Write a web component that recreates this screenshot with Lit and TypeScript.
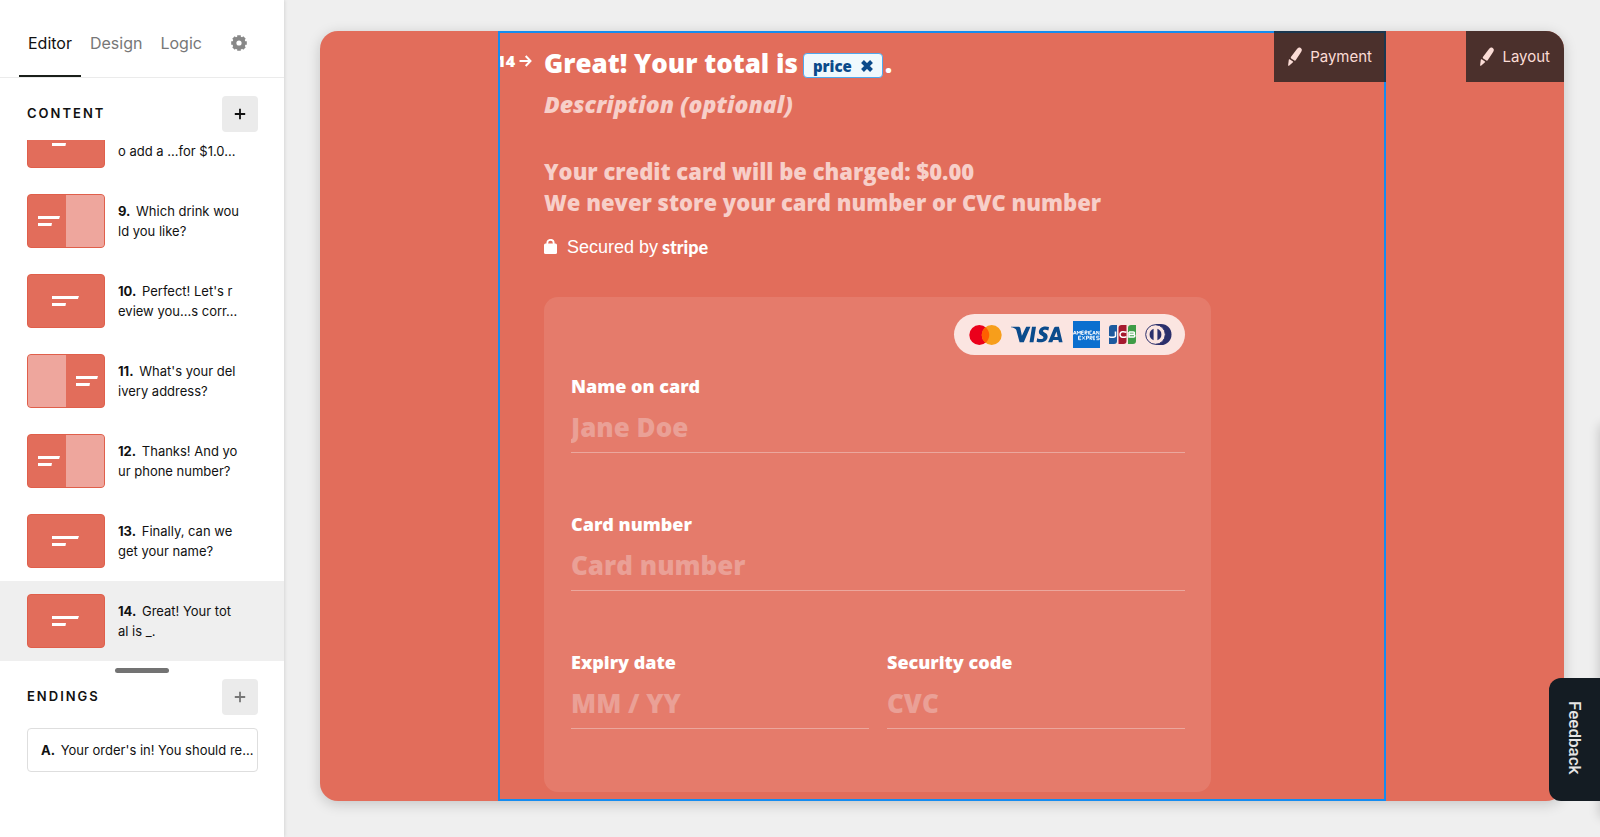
import { LitElement, html, css, svg } from "lit";
import { customElement, property } from "lit/decorators.js";
import { classMap } from "lit/directives/class-map.js";

type Layout = "center" | "left" | "right";

interface Question {
  num: string;
  lines: string[];
  layout: Layout;
  active?: boolean;
}

const QUESTIONS: Question[] = [
  { num: "", lines: ["", "o add a ...for $1.0..."], layout: "center" },
  { num: "9.", lines: ["Which drink wou", "ld you like?"], layout: "left" },
  { num: "10.", lines: ["Perfect! Let's r", "eview you...s corr..."], layout: "center" },
  { num: "11.", lines: ["What's your del", "ivery address?"], layout: "right" },
  { num: "12.", lines: ["Thanks! And yo", "ur phone number?"], layout: "left" },
  { num: "13.", lines: ["Finally, can we", "get your name?"], layout: "center" },
  { num: "14.", lines: ["Great! Your tot", "al is _."], layout: "center", active: true },
];

const plusIcon = html`<svg width="12" height="12" viewBox="0 0 12 12" aria-hidden="true">
  <path d="M6 .8v10.4M.8 6h10.4" stroke="currentColor" stroke-width="1.8" />
</svg>`;

const pencilIcon = html`<svg width="16" height="20" viewBox="0 0 16 20" aria-hidden="true">
  <path
    fill="currentColor"
    d="M9 3.200 10.400 1.500C11.400.4 12.500.2 13.700 1c1.200.8 1.500 1.900.8 3.200l-1.200 2.100-4.600 6.900c-.3.500-.8.600-1.300.3L4.200 11.400c-.5-.3-.6-.8-.3-1.300zM2.700 12.300l3.300 2.200c.3.200.3.600 0 .8L2 18.700c-.5.300-1 0-.9-.5l.7-5.500c.1-.5.500-.7.9-.4z"
  />
</svg>`;

@customElement("question-thumb")
class QuestionThumb extends LitElement {
  @property() layout: Layout = "center";

  static styles = css`
    :host {
      display: block;
    }
    .thumb {
      display: flex;
      box-sizing: border-box;
      width: 78px;
      height: 54px;
      border: 1px solid #e05f4b;
      border-radius: 4px;
      background: #e26d5b;
      overflow: hidden;
    }
    .right {
      flex-direction: row-reverse;
    }
    .text,
    .picture {
      box-sizing: border-box;
      width: 38px;
    }
    .text {
      display: flex;
      flex: 1;
      flex-direction: column;
      justify-content: center;
      gap: 4px;
      padding-left: 10px;
    }
    .center .text {
      padding-left: 24px;
    }
    .picture {
      background: #eea69d;
    }
    .long,
    .short {
      width: 22px;
      height: 3px;
      background: #fff;
      clip-path: polygon(0 0, 100% 0, 96% 100%, 0 100%);
    }
    .center .long {
      width: 27px;
    }
    .short,
    .center .short {
      width: 14px;
    }
  `;

  render() {
    return html`<div class=${classMap({ thumb: true, [this.layout]: true })}>
      <div class="text"><div class="long"></div><div class="short"></div></div>
      ${this.layout === "center" ? null : html`<div class="picture"></div>`}
    </div>`;
  }
}

@customElement("editor-sidebar")
class EditorSidebar extends LitElement {
  static styles = css`
    :host {
      display: flex;
      flex-direction: column;
      width: 284px;
      flex: none;
      min-height: 0;
      background: #fff;
      box-shadow: 0 0 4px rgba(0, 0, 0, 0.16);
      font-family: Inter, sans-serif;
      color: #111;
    }
    button {
      font: inherit;
      color: inherit;
      border: 0;
      padding: 0;
      margin: 0;
      background: none;
      cursor: pointer;
    }
    .tabs {
      display: flex;
      height: 77px;
      padding-left: 19px;
      border-bottom: 1px solid #ebebeb;
      font-size: 16px;
    }
    .tab {
      display: flex;
      align-items: center;
      padding: 9px 9px 0;
      height: 77px;
      color: #777;
    }
    .tab.on {
      color: #111;
      box-shadow: inset 0 -2px #1a1f1a;
    }
    .gear {
      margin-left: 11px;
      color: #888;
    }
    .head {
      display: flex;
      justify-content: space-between;
      align-items: center;
      padding: 0 26px 0 27px;
    }
    .content-head {
      padding-top: 18px;
      padding-bottom: 8px;
    }
    h2 {
      margin: 0;
      padding-bottom: 2px;
      font-size: 13px;
      font-weight: 600;
      letter-spacing: 2px;
    }
    .add {
      display: grid;
      place-items: center;
      width: 36px;
      height: 36px;
      border-radius: 4px;
      background: #ebebeb;
    }
    .muted {
      color: #777;
    }
    .list {
      flex: 1;
      min-height: 0;
      display: flex;
      flex-direction: column;
      justify-content: flex-end;
      overflow: hidden;
    }
    .row {
      display: flex;
      flex: none;
      align-items: center;
      gap: 13px;
      height: 80px;
      padding-left: 27px;
      text-align: left;
      font-size: 13px;
      line-height: 20px;
    }
    .row.active {
      background: #efefef;
    }
    .line {
      display: block;
      min-height: 20px;
      white-space: nowrap;
    }
    b {
      font-weight: 700;
      margin-right: 2px;
    }
    .handle {
      width: 54px;
      height: 5px;
      margin: 7px auto 6px;
      border-radius: 3px;
      background: #737373;
    }
    .ending {
      box-sizing: border-box;
      display: block;
      height: 44px;
      margin: 13px 26px 65px 27px;
      padding: 0 0 0 13px;
      border: 1px solid #dedede;
      border-radius: 4px;
      text-align: left;
      white-space: nowrap;
      font-size: 13px;
    }
  `;

  render() {
    return html`
      <nav class="tabs">
        <button class="tab on">Editor</button>
        <button class="tab">Design</button>
        <button class="tab">Logic</button>
        <button class="tab gear" aria-label="Settings">
          <svg width="16" height="16" viewBox="0 0 16 16">
            <circle cx="8" cy="8" r="4.600" fill="none" stroke="currentColor" stroke-width="4" />
            ${[0, 45, 90, 135].map(
              (a) => svg`<path d="M8 0.200v3M8 12.800v3" stroke="currentColor" stroke-width="3.600" transform="rotate(${a} 8 8)" />`
            )}
          </svg>
        </button>
      </nav>
      <div class="head content-head">
        <h2>CONTENT</h2>
        <button class="add" aria-label="Add content">${plusIcon}</button>
      </div>
      <div class="list">
        ${QUESTIONS.map(
          (q) => html`<button class=${classMap({ row: true, active: !!q.active })}>
            <question-thumb .layout=${q.layout}></question-thumb>
            <span>
              <span class="line"><b>${q.num}</b> ${q.lines[0]}</span>
              <span class="line">${q.lines[1]}</span>
            </span>
          </button>`
        )}
      </div>
      <div class="handle"></div>
      <div class="head">
        <h2>ENDINGS</h2>
        <button class="add muted" aria-label="Add ending">${plusIcon}</button>
      </div>
      <button class="ending"><b>A.</b> Your order's in! You should re...</button>
    `;
  }
}

@customElement("card-brands")
class CardBrands extends LitElement {
  static styles = css`
    :host {
      display: flex;
      align-items: center;
      justify-content: space-between;
      box-sizing: border-box;
      width: 231px;
      height: 41px;
      padding: 0 13px 0 15px;
      border-radius: 21px;
      background: #fbe5e1;
    }
    svg {
      display: block;
    }
  `;

  render() {
    return html`
      <svg width="33" height="20" viewBox="0 0 33 20" role="img" aria-label="Mastercard">
        <circle cx="10.300" cy="10" r="10" fill="#eb001b" />
        <circle cx="22.700" cy="10" r="10" fill="#f79e1b" />
        <path d="M16.500 2.200a10 10 0 0 1 0 15.600 10 10 0 0 1 0-15.600z" fill="#ff5f00" />
      </svg>
      <svg width="52" height="17" viewBox="0 0 52 17" role="img" aria-label="Visa">
        <path
          fill="#0b4b8c"
          d="M0 .7h7.200c1 0 1.800.3 2.100 1.400L10.900 9.800 15.200.7h4.200L12.800 16.300H8.600L5.300 4C4.800 2.400 2.300 1.500 0 1.200zM21 .7h4l-2.500 15.600h-4zM38 1.100l-.6 3.300c-2.600-1.200-5.400-.8-5.400.6 0 1.600 5 1.900 4.600 5.900-.4 4.500-5.600 6.300-11 4.800l.6-3.500c3 1.400 6.200 1 6.200-.8 0-1.800-5-2-4.500-5.900C28.400 1.200 33.500-.6 38 1.100zM44.700.7h3.200L51.600 16.300h-3.700l-.5-2.200h-5.200l-.9 2.200h-4.200L43 1.900c.3-.8.9-1.200 1.700-1.200zm.8 4.700-2.200 5.700h3.400z"
        />
      </svg>
      <svg width="27" height="27" viewBox="0 0 27 27" role="img" aria-label="American Express">
        <rect width="27" height="27" fill="#0b6fcf" />
        <g fill="none" stroke="#fff" stroke-width=".9">
          <path d="M.3 13.500 1.800 10l1.500 3.500M.9 12.600h1.800M4.300 13.500V10l1.500 2.200L7.300 10v3.500M10.700 10H8.600v3.500h2.100M8.600 11.700h1.900M12 13.500V10h2v1.700h-2l2 1.800M15.400 10v3.500M18.800 10h-2v3.500h2M19.600 13.500 21 10l1.500 3.500M20.200 12.600h1.800M23.700 13.500V10l2.300 3.500V10" />
          <path d="M8 15.200H5.500v3.500H8M5.500 17h2M9 15.200l3 3.500M12 15.200l-3 3.500M13.500 18.700v-3.500h2V17h-2M17 18.700v-3.500h2V17h-2l2 1.700M22 15.200h-1.800v3.500H22M20.200 17H22M26.500 15.200h-2.800V17h2.500v1.700h-2.800" />
        </g>
      </svg>
      <svg width="27" height="19" viewBox="0 0 27 19" role="img" aria-label="JCB">
        <path d="M3 0H8v16a3 3 0 0 1-3 3H0V3A3 3 0 0 1 3 0z" fill="#1d5a9e" />
        <path d="M12.500 0H17.500v16a3 3 0 0 1-3 3H9.500V3A3 3 0 0 1 12.500 0z" fill="#a6192e" />
        <path d="M22 0H27v16a3 3 0 0 1-3 3H19V3A3 3 0 0 1 22 0z" fill="#3f9c46" />
        <g fill="none" stroke="#fff" stroke-width="1.500">
          <path d="M6.500 6.500v4.300c0 1.800-4.200 2-6.500.8M17.500 7.300c-3-1-6.500-1-6.500 2.200s3.500 3.200 6.500 2.200M20 6.900h4.300c1.600 0 1.600 2.400 0 2.400H20M20 9.500h4.600c1.700 0 1.700 2.500 0 2.500H20zM20 6.900V12" />
        </g>
      </svg>
      <svg width="27" height="21" viewBox="0 0 27 21" role="img" aria-label="Diners Club">
        <path d="M10.500 0H16c6 0 10.500 4.600 10.500 10.400C26.500 16.500 22 21 16 21h-5.500z" fill="#2b2f6b" />
        <circle cx="10.500" cy="10.500" r="9.800" fill="#fbe5e1" stroke="#2b2f6b" stroke-width="1" />
        <path d="M8.600 4.700a6.200 6.200 0 0 0 0 11.600zM12.400 4.700a6.200 6.200 0 0 1 0 11.600z" fill="#2b2f6b" />
      </svg>
    `;
  }
}

@customElement("payment-block")
class PaymentBlock extends LitElement {
  static styles = css`
    :host {
      display: block;
      box-sizing: border-box;
      width: 100%;
      border: 2px solid #148cf0;
      padding: 14px 173px 0 0;
      font-family: "Open Sans", sans-serif;
      font-weight: 800;
      color: #fff;
    }
    .question {
      display: grid;
      grid-template-columns: 44px minmax(0, 1fr);
    }
    .index {
      display: flex;
      justify-content: flex-end;
      align-items: center;
      gap: 4px;
      height: 28px;
      padding-right: 12px;
      overflow: hidden;
      font-size: 16px;
    }
    .index svg {
      flex: none;
    }
    h1 {
      display: flex;
      align-items: center;
      margin: 0;
      font-size: 26px;
      line-height: 32px;
      font-weight: 800;
      white-space: nowrap;
    }
    .chip {
      display: flex;
      align-items: center;
      gap: 9px;
      box-sizing: border-box;
      height: 25px;
      margin: 5px 2px 0 5px;
      padding: 0 9px;
      border: 1px solid #4fa9ee;
      border-radius: 4px;
      background: #f0f9fd;
      color: #0b4a8a;
      font: inherit;
      font-size: 15px;
      line-height: 20px;
    }
    .description {
      margin: 10px 0 0;
      font-size: 23px;
      line-height: 31px;
      font-style: italic;
      color: #f7cfc9;
    }
    .note {
      margin: 36px 0 0;
      font-size: 22px;
      line-height: 31px;
      color: #f7cfc9;
      white-space: nowrap;
    }
    .secured {
      display: flex;
      align-items: center;
      margin: 17px 0 0;
      font: 18px/24px "Liberation Sans", sans-serif;
    }
    .secured svg {
      margin-right: 10px;
    }
    .stripe {
      margin-left: 4px;
      font-family: Lato, sans-serif;
      font-weight: 900;
    }
    .card {
      display: flex;
      flex-direction: column;
      margin-top: 38px;
      padding: 17px 26px 63px 27px;
      border-radius: 14px;
      background: rgba(255, 255, 255, 0.1);
    }
    card-brands {
      align-self: flex-end;
      margin-bottom: 19px;
    }
    .fields {
      display: grid;
      grid-template-columns: 1fr 1fr;
      gap: 59px 18px;
    }
    .wide {
      grid-column: span 2;
    }
    label {
      display: block;
      font-size: 18px;
      line-height: 24px;
    }
    input {
      display: block;
      box-sizing: border-box;
      width: 100%;
      height: 45px;
      margin: 10px 0 0;
      padding: 0 0 7px;
      border: 0;
      border-bottom: 1px solid #eba79d;
      border-radius: 0;
      outline: 0;
      background: none;
      color: #fff;
      font: inherit;
      font-size: 26px;
    }
    input::placeholder {
      color: #eaa096;
      opacity: 1;
    }
  `;

  private field(id: string, label: string, placeholder: string, wide: boolean) {
    return html`<div class=${classMap({ wide })}>
      <label for=${id}>${label}</label>
      <input id=${id} placeholder=${placeholder} />
    </div>`;
  }

  render() {
    return html`<div class="question">
      <div class="index">
        14
        <svg width="13" height="12" viewBox="0 0 13 12" aria-hidden="true">
          <path d="M.5 6h11M6.700 1l4.800 5-4.800 5" fill="none" stroke="currentColor" stroke-width="2" />
        </svg>
      </div>
      <div>
        <h1>
          Great! Your total is
          <button class="chip">
            price
            <svg width="12" height="12" viewBox="0 0 12 12" aria-hidden="true">
              <path d="M1.500 1.500l9 9M10.500 1.500l-9 9" stroke="currentColor" stroke-width="4" />
            </svg></button
          >.
        </h1>
        <p class="description">Description (optional)</p>
        <p class="note">
          Your credit card will be charged: $0.00<br />We never store your card number or CVC number
        </p>
        <p class="secured">
          <svg width="13" height="16" viewBox="0 0 13 16" aria-hidden="true">
            <path d="M3.300 6V4a3.200 3.200 0 0 1 6.400 0v2" fill="none" stroke="currentColor" stroke-width="1.800" />
            <rect y="4.500" width="13" height="10.500" rx="1.500" fill="currentColor" />
          </svg>
          Secured by <span class="stripe">stripe</span>
        </p>
        <div class="card">
          <card-brands></card-brands>
          <div class="fields">
            ${this.field("name", "Name on card", "Jane Doe", true)}
            ${this.field("number", "Card number", "Card number", true)}
            ${this.field("expiry", "Expiry date", "MM / YY", false)}
            ${this.field("code", "Security code", "CVC", false)}
          </div>
        </div>
      </div>
    </div>`;
  }
}

@customElement("app-root")
class AppRoot extends LitElement {
  static styles = css`
    :host {
      display: flex;
      height: 100vh;
      overflow: hidden;
      position: relative;
      background: #efefef;
      font-family: Inter, sans-serif;
    }
    .stage {
      flex: 1;
      min-width: 0;
      display: flex;
      padding: 31px 36px 36px;
    }
    .canvas {
      flex: 1;
      position: relative;
      display: flex;
      justify-content: center;
      border-radius: 18px;
      background: #e26d5b;
      box-shadow: 0 3px 14px rgba(0, 0, 0, 0.18);
    }
    .frame {
      position: relative;
      display: flex;
      width: 888px;
    }
    .edit {
      position: absolute;
      top: 0;
      right: 0;
      display: flex;
      align-items: center;
      gap: 7px;
      height: 51px;
      padding: 0 14px 0 13px;
      border: 0;
      background: rgba(30, 30, 30, 0.77);
      color: #fbdcd6;
      font: 15px Inter, sans-serif;
    }
    .layout {
      border-top-right-radius: 18px;
    }
    .feedback {
      position: absolute;
      right: 0;
      bottom: 36px;
      width: 51px;
      height: 123px;
      padding: 0 0 4px;
      border: 0;
      border-radius: 12px 0 0 12px;
      background: #141c23;
      color: #e6e6e6;
      font: 500 17px Roboto, sans-serif;
      writing-mode: vertical-rl;
    }
    .drawer {
      position: absolute;
      left: 100%;
      top: 425px;
      bottom: 20px;
      width: 20px;
      box-shadow: 0 0 12px rgba(0, 0, 0, 0.2);
    }
  `;

  render() {
    return html`
      <editor-sidebar></editor-sidebar>
      <main class="stage">
        <div class="canvas">
          <div class="frame">
            <payment-block></payment-block>
            <button class="edit">${pencilIcon} Payment</button>
          </div>
          <button class="edit layout">${pencilIcon} Layout</button>
        </div>
      </main>
      <div class="drawer"></div>
      <button class="feedback">Feedback</button>
    `;
  }
}
